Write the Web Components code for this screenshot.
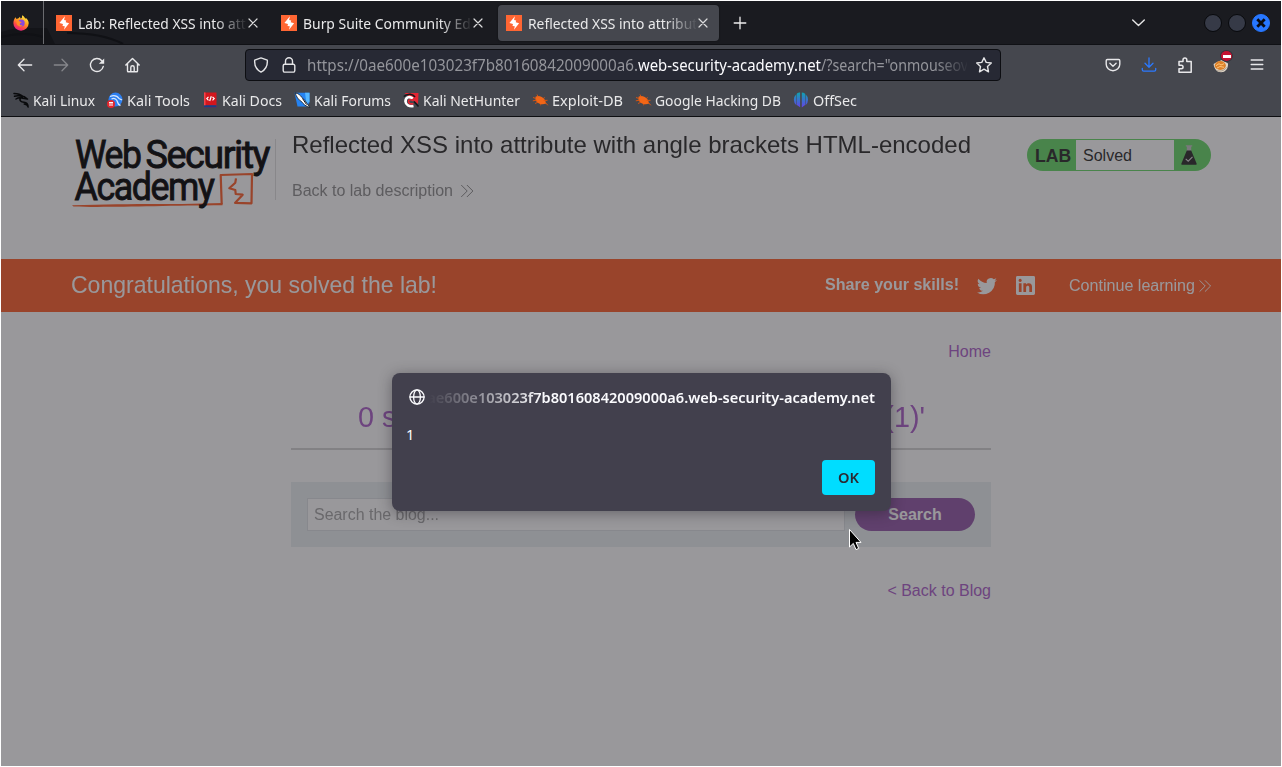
<!DOCTYPE html>
<html lang="en">
<head>
<meta charset="utf-8">
<title>Reflected XSS into attribute with angle brackets HTML-encoded</title>
<style>
html,body{margin:0;height:100%;background:#fff;overflow:hidden}
</style>
</head>
<body>
<browser-window></browser-window>
<script>
const define = (name, html, setup) => {
  const t = document.createElement('template');
  t.innerHTML = html;
  customElements.define(name, class extends HTMLElement {
    constructor() { super(); this.attachShadow({mode: 'open'}); }
    connectedCallback() {
      if (this.ready) return;
      this.ready = true;
      this.shadowRoot.append(t.content.cloneNode(true));
      if (setup) setup.call(this, this.shadowRoot);
    }
  });
};

// One line of text, condensed so that it is exactly w pixels wide.
define('fit-text', `<style>:host{display:inline-block;white-space:pre;flex:none;text-align:left}span{display:inline-block;transform-origin:0 50%}</style><span><slot></slot></span>`, function (r) {
  const w = Number(this.getAttribute('w'));
  const span = r.querySelector('span');
  const k = w / span.getBoundingClientRect().width;
  this.style.width = w + 'px';
  span.style.transform = `scaleX(${k.toFixed(5)})`;
});

const L = 'fill="none" stroke-linecap="round" stroke-linejoin="round"';
const S = L + ' stroke="currentColor"';
const ICONS = {
  firefox: `<defs><linearGradient id="a" x1=".8" y1="0" x2=".25" y2="1"><stop offset="0" stop-color="#fff04a"/><stop offset=".4" stop-color="#ffa51f"/><stop offset=".7" stop-color="#ff4a45"/><stop offset="1" stop-color="#e3178f"/></linearGradient></defs><path d="M8 15.700A7.500 7.500 0 0 1 .4 8.200C.4 6 1.200 4 2.500 2.300L3.500 4 5.500 3.200 7 1.800 7.400 3.500 8.800 3 9.200.3C11 1.500 11.800 2.500 12.200 3.600L13.300 3.200C15 4.800 15.700 6.500 15.700 8.300A7.600 7.600 0 0 1 8 15.700z" fill="url(#a)"/><circle cx="8.200" cy="8" r="3.500" fill="#8a48dd"/><path d="M3 5.200C4.600 4.800 6 5.400 6.600 6.400L8.600 6.900C8.200 8 7 8 6.700 8.700 6.500 9.800 8 10.500 9.500 10.200 8.500 12 5 11.800 3.900 9.600z" fill="#ff8a25"/>`,
  burp: `<path d="M0 0h16v16H0z" fill="#ff6633"/><path d="M8.900 1.300 3.400 8l3.600.9-.5 2 2.300.3-.8 3.600 5.100-6.500-3.400-1 .5-1.900-2.100-.5z" fill="#fff"/>`,
  close: `<path ${S} stroke-width="1.200" d="M4 4l8 8M12 4l-8 8"/>`,
  plus: `<path ${S} stroke-width="1.300" d="M8 2.200v11.600M2.200 8h11.600"/>`,
  back: `<path ${S} stroke-width="1.300" d="M14.700 8H1.500M7 2.300 1.300 8 7 13.700"/>`,
  forward: `<path ${S} stroke-width="1.300" d="M1.300 8h13.200M9 2.300 14.700 8 9 13.700"/>`,
  reload: `<path ${S} stroke-width="1.400" d="M14.300 9.400A6.500 6.500 0 1 1 12.800 3.700"/><path d="M15.200 1.400v5.400H9.800z" fill="currentColor"/>`,
  home: `<path ${S} stroke-width="1.400" d="M.8 8.100 7.500 1.500l6.700 6.600M2.500 6.700v7.200a.8.800 0 0 0 .8.800h8.400a.8.800 0 0 0 .8-.8V6.700M5.800 14.500v-4a1.700 1.700 0 0 1 3.400 0v4"/>`,
  shield: `<path ${S} stroke-width="1.400" d="M8 .9 14.300 3.200c.4 5-1.800 9.600-6.300 11.900C3.500 12.800 1.300 8.200 1.700 3.200z"/>`,
  lock: `<path ${S} stroke-width="1.400" d="M3.700 7.200h8.600a1.500 1.500 0 0 1 1.500 1.500v4.900a1.500 1.500 0 0 1-1.500 1.500H3.700a1.500 1.500 0 0 1-1.500-1.500V8.700a1.500 1.500 0 0 1 1.500-1.500zM4.500 7V4.300a3.500 3.500 0 0 1 7 0V7"/>`,
  star: `<path ${S} stroke-width="1.400" d="M8 .8 10.200 5.400 15.300 6 11.500 9.500l1 5.300L8 12.200l-4.500 2.600 1-5.300L.7 6l5.100-.6z"/>`,
  pocket: `<path ${S} stroke-width="1.400" d="M2.400 2.500h11.200c.7 0 1.200.5 1.200 1.200v3.500a6.800 6.500 0 0 1-13.600 0V3.700c0-.7.5-1.200 1.200-1.200zM4.900 6.300 8 9.200l3.100-2.900"/>`,
  download: `<path ${S} stroke-width="1.300" d="M8 .8v9.400M4 6.300 8 10.300 12 6.300M1.300 11.300v1.400c0 .8.600 1.400 1.400 1.400h10.600c.8 0 1.400-.6 1.400-1.400v-1.400"/>`,
  puzzle: `<path ${S} stroke-width="1.500" d="M2 5.200V4.500h4V3a1.900 1.900 0 0 1 3.800 0v1.500h4.400v10.700H2V11.700h2.300a1.700 1.700 0 0 0 0-3.500H2z"/>`,
  menu: `<path ${S} stroke-width="1.400" d="M2.200 3h11.600M2.200 7.500h11.600M2.200 12h11.600"/>`,
  chevron: `<path ${S} stroke-width="1.400" d="M2.700 5 8.500 10.500l5.800-5.500"/>`,
  globe: `<g ${S} stroke-width="1.300"><circle cx="8" cy="8" r="7.100"/><ellipse cx="8" cy="8" rx="3.400" ry="7.100"/><path d="M1 8h14"/></g>`,
  cookie: `<path d="M.6 7 4 5l5-2 6 3.500c.3 5-2.500 8.800-7 8.800S1.200 11.500.6 7z" fill="#e0d6c8"/><ellipse cx="7.300" cy="8.500" rx="5.600" ry="4.400" fill="#dd8128"/><path d="M3 8.700 6 6.700l2 1.300L11 6.700M4 11l3-1.500 4 .8" stroke="#ffc67d" fill="none"/><path d="M3.500 13.300c3 1.500 7 1 10-2.800" stroke="#a89c8c" fill="none"/>`,
  dragon: `<path ${L} stroke="#08090b" stroke-width="1.500" d="M1 1.500c3 .2 6 .5 8.500 2.500M1.500 4.300C4 3.700 7 3.500 9.500 5M3 7c2-1.500 4.500-1.600 7-.8l4.500.8-3-2.200-3-.8M7.500 6c-1.500 2.500.5 4 3.500 4.300 3 .3 4 2 4.200 4.700-.5-2-2-2.900-4-3"/>`,
  tools: `<circle cx="8.500" cy="7.600" r="7" fill="#2d7ff0"/><path d="M3 4.500c4-1.500 7-1 9 2l3 1.500M4.500 7c3-1.500 5.500.5 6 3s2 3 3 3.500" fill="none" stroke="#d6e8ff" stroke-width="1.300"/><circle cx="4" cy="12" r="4" fill="#e3262d"/><path d="M2 10.500h4M3 10.500V14M5 10.500V14" stroke="#fff" stroke-width="1"/>`,
  docs: `<path d="M2 .5h12.500v15H2z" fill="#d3161d"/><path d="M2 13.200h12.500v2.300H2z" fill="#173f87"/><path d="M2 .5h1.500v12.700H2z" fill="#f1464b"/><path d="M6.500 4.800 4.800 6.600l1.700 1.800M10.500 4.800l1.700 1.800-1.700 1.800M9.300 4.300 7.700 9" fill="none" stroke="#fff" stroke-width="1.200"/>`,
  forums: `<path d="M.5.800h15v9.700l-2.500 4H3.500z" fill="#2583f2"/><path d="M11 .8h4.500v9l-3 2z" fill="#54b7ff"/><path d="M1 1c3.500.3 5 2 7 4.500 2 2 4 4 5 6l2.800 4C12 14.500 9 12 7.500 9.500 4 8 2.500 4 1 1z" fill="#fff" stroke="#101822" stroke-width=".8"/><path d="m8.500 6.500 4 6" stroke="#15171c"/>`,
  hunter: `<path d="M1.500 1H15.500L15 12z" fill="#e52432"/><path d="M11 9.500 15.500 14.500M.8 4.500C5 .8 10 2 12 5" stroke="#15161a" stroke-width="1.600" fill="none"/><path d="M9.800 6.500C6 3.500 2.500 5.500 2.500 9.500c.3 3.500 3.700 5.300 8 4.500" fill="none" stroke="#fff" stroke-width="2.700"/><path d="M10.500 9C8 7 5.300 7.500 5.500 9.600c.2 2 3 2.800 5 2" fill="none" stroke="#e52432" stroke-width="1.600"/>`,
  bug: `<path d="M3.500 4.800C6 3.200 10.500 4.500 13 8l1.200 3.500C9.500 13.500 5 11.500 3.500 8z" fill="#f26617"/><path d="M1 5.500l3 1M.8 8.800l4-.6M3 11.500l3-1.300M5 2.500l1 2M9 12l-.5 1.300M12.500 5.200l-1.200 1.600M13 10l2.800 3.300M11.500 8.500l4-.2" stroke="#e2560c" stroke-width=".9"/>`,
  offsec: `<defs><linearGradient id="o" x1="0" y1="0" x2="0" y2="1"><stop offset="0" stop-color="#0fa3b1"/><stop offset="1" stop-color="#6540e8"/></linearGradient></defs><path d="M3.300 2.300v11A7.400 7.400 0 0 1 3.300 2.300zM3.800 1.700C5 .9 6 .7 7.100.6v14.600c-1.200-1-2.400-1.600-3.300-2.200zM8.800.6c1 .1 2.300.4 3.300 1.100V13l-3.300 2.600zM12.600 2.300v11a7.400 7.400 0 0 0 0-11z" fill="url(#o)"/>`,
  guillemet: `<path ${S} stroke-width="1" d="M2 2.300 7.700 8 2 13.700M7.700 2.300 13.400 8l-5.700 5.700"/>`,
  twitter: `<path fill="currentColor" d="M15.900 3.100a6.500 6.500 0 0 1-1.900.5 3.300 3.300 0 0 0 1.500-1.800 6.600 6.600 0 0 1-2.100.8A3.300 3.300 0 0 0 7.800 5.600 9.300 9.300 0 0 1 1.100 2.200a3.300 3.300 0 0 0 1 4.400 3.300 3.300 0 0 1-1.500-.4 3.300 3.300 0 0 0 2.600 3.200 3.300 3.300 0 0 1-1.500.1 3.300 3.300 0 0 0 3.100 2.300A6.600 6.600 0 0 1 0 13.100a9.300 9.300 0 0 0 14.300-8.300 6.700 6.700 0 0 0 1.600-1.700z"/>`,
  linkedin: `<path fill="currentColor" fill-rule="evenodd" d="M1.200 0h13.600Q16 0 16 1.200v13.600Q16 16 14.800 16H1.200Q0 16 0 14.800V1.200Q0 0 1.200 0zM2.400 6.100v7.400h2.300V6.100zM3.500 2.400a1.350 1.350 0 1 0 .01 0zM6.200 6.100v7.400h2.300V9.800c0-2 2.700-2.200 2.700 0v3.700h2.300V9c0-3.600-3.700-3.600-5-1.800V6.100z"/>`,
  wclose: `<path d="M4.300 4.300l7.400 7.400M11.700 4.300l-7.400 7.400" stroke="#0b0c10" stroke-width="2.800"/>`
};
define('ui-icon', `<style>:host{display:inline-block;width:16px;height:16px;flex:none}svg{display:block;width:100%;height:100%;overflow:visible}</style>`, function (r) {
  r.append(document.createRange().createContextualFragment(`<svg viewBox="0 0 16 16">${ICONS[this.getAttribute('name')]}</svg>`));
});

define('browser-tab', `<style>
:host{display:flex;align-items:center;box-sizing:border-box;width:221px;height:36px;padding:0 8px;border-radius:4px;color:#e9e9ea;flex:none}
:host([active]){background:#45474e;box-shadow:0 0 2px #0008}
.t{margin-left:6px;width:168px;overflow:hidden;white-space:nowrap;-webkit-mask:linear-gradient(90deg,#000 137px,transparent 170px)}
ui-icon.x{margin-left:-1px;color:#dcdcdd}
</style><ui-icon name="burp"></ui-icon><div class="t"><slot></slot></div><ui-icon class="x" name="close"></ui-icon>`);

define('tab-strip', `<style>
:host{display:flex;height:44px;background:#1a1b20;align-items:center;position:relative;box-sizing:border-box;border-bottom:1px solid #101115}
.art{position:absolute;left:0;bottom:0}
.pin{width:42px;height:43px;border-right:1px solid #6a6b6f;display:flex;align-items:center;position:relative}
.pin ui-icon{margin-left:12px;width:16px;height:16px}
.tabs{display:flex;gap:4px;margin-left:4px;position:relative}
.plus{margin-left:13px;color:#eee}
.chev{margin-left:auto;margin-right:58px;color:#e6e6e6}
.b{width:16px;height:16px;border-radius:50%;background:#363a47;border:1px solid #08090c;margin-right:6px}
.c{background:#2777ff;border-color:#2777ff;margin-right:11px;display:flex}
</style>
<svg class="art" width="180" height="16" viewBox="0 0 180 16"><path d="M0 4Q24-3 46 0l8 16H0z" fill="#131418"/><path d="M0 9Q25 3 42 9M66 5q36 0 56 11" fill="none" stroke="#101115" stroke-width="2"/></svg>
<div class="pin"><ui-icon name="firefox"></ui-icon></div>
<div class="tabs">
<browser-tab><fit-text w="177">Lab: Reflected XSS into attri</fit-text></browser-tab>
<browser-tab><fit-text w="180">Burp Suite Community Editi</fit-text></browser-tab>
<browser-tab active><fit-text w="177">Reflected XSS into attribute</fit-text></browser-tab></div>
<ui-icon class="plus" name="plus"></ui-icon>
<ui-icon class="chev" name="chevron"></ui-icon>
<span class="b"></span><span class="b"></span><span class="b c"><ui-icon name="wclose"></ui-icon></span>`);

define('address-bar', `<style>
:host{display:flex;align-items:center;box-sizing:border-box;width:756px;height:32px;border:1px solid #0d0e12;border-radius:4px;background:#272934;color:#e4e4e6;padding-left:7px;flex:none}
.lock{margin-left:12px}
.u{margin-left:10px;width:660px;overflow:hidden;white-space:nowrap;font-size:15.500px;color:#94959b;display:flex;-webkit-mask:linear-gradient(90deg,#000 628px,transparent 662px)}
b{font-weight:400;color:#fbfbfe}
.star{margin-left:9px}
</style><ui-icon name="shield"></ui-icon><ui-icon class="lock" name="lock"></ui-icon>
<div class="u"><fit-text w="331">https://0ae600e103023f7b80160842009000a6.</fit-text><b><fit-text w="183">web-security-academy.net</fit-text></b><fit-text w="161">/?search="onmouseover</fit-text></div>
<ui-icon class="star" name="star"></ui-icon>`);

define('nav-bar', `<style>
:host{display:flex;align-items:center;height:40px;color:#e8e8ea;padding:0 16px;box-sizing:border-box}
.fw{margin-left:20px;color:#85868b}.g{margin-left:20px}
address-bar{margin-left:104px}
.p{margin-left:104px}
.d{margin-left:20px;color:#2b79ff}
.ck{position:relative;margin-left:20px;display:flex}
.badge{position:absolute;left:8px;top:-6px;width:11px;height:10px;border-radius:50%;background:#c41230;box-shadow:0 0 0 1px #33343a;display:flex;align-items:center;justify-content:center}
.badge i{width:8px;height:3px;background:#fff}
</style><ui-icon name="back"></ui-icon><ui-icon class="fw" name="forward"></ui-icon><ui-icon class="g" name="reload"></ui-icon><ui-icon class="g" name="home"></ui-icon>
<address-bar></address-bar>
<ui-icon class="p" name="pocket"></ui-icon><ui-icon class="d" name="download"></ui-icon><ui-icon class="g" name="puzzle"></ui-icon>
<span class="ck"><ui-icon name="cookie"></ui-icon><span class="badge"><i></i></span></span><ui-icon class="g" name="menu"></ui-icon>`);

define('book-mark', `<style>:host{display:flex;align-items:center;gap:4px;color:#e9e9ea}</style><ui-icon></ui-icon><slot></slot>`, function (r) {
  const i = document.createElement('ui-icon');
  i.setAttribute('name', this.getAttribute('icon'));
  r.querySelector('ui-icon').replaceWith(i);
});
define('bookmarks-bar', `<style>:host{display:flex;align-items:center;gap:12px;height:31px;padding:0 0 1px 12px;box-sizing:border-box;border-bottom:1px solid #0d0e11;margin-bottom:0}
:host{height:32px}book-mark{margin-top:-1px}</style>
<book-mark icon="dragon"><fit-text w="62">Kali Linux</fit-text></book-mark>
<book-mark icon="tools"><fit-text w="63">Kali Tools</fit-text></book-mark>
<book-mark icon="docs"><fit-text w="60">Kali Docs</fit-text></book-mark>
<book-mark icon="forums"><fit-text w="77">Kali Forums</fit-text></book-mark>
<book-mark icon="hunter"><fit-text w="97">Kali NetHunter</fit-text></book-mark>
<book-mark icon="bug"><fit-text w="71">Exploit-DB</fit-text></book-mark>
<book-mark icon="bug"><fit-text w="126">Google Hacking DB</fit-text></book-mark>
<book-mark icon="offsec"><fit-text w="44">OffSec</fit-text></book-mark>`);

define('academy-logo', `<style>:host{display:block;width:203px;height:80px;flex:none}svg{display:block}text{font:400 38px Roboto,sans-serif;letter-spacing:-1.500px;fill:#0b0b0b;stroke:#0b0b0b;stroke-width:.9}</style>
<svg width="203" height="80" viewBox="0 0 203 80" fill="none">
<path d="M150.700 65.300 149.700 36 181 35l-.5 29.300-16.500-.4 7.700-8.200-7-.7-.4-4-6-1.700 6-5.600.7-4.400" stroke="#f63" stroke-width="2.200" stroke-linejoin="round"/>
<path d="M1 66.300c40-1 70-1.500 110-1.200l40.500-1v2.200c-60 .3-120 2.500-149 1.200z" fill="#f63"/>
<text x="4" y="28.600" textLength="65.500" lengthAdjust="spacingAndGlyphs">Web</text>
<text x="74.500" y="28.600" textLength="123.500" lengthAdjust="spacingAndGlyphs">Security</text>
<text x="3.500" y="61" textLength="139" lengthAdjust="spacingAndGlyphs">Academy</text></svg>`);

define('lab-status', `<style>
:host{display:flex;align-items:center;box-sizing:border-box;width:184px;height:32px;border-radius:16px;background:#6ddb6d;color:#333332;flex:none}
b{font-size:17.600px;width:49px;padding-left:8px;box-sizing:border-box;padding-top:2px}
span{background:#fff;width:98px;height:30px;line-height:31px;padding-left:7px;box-sizing:border-box}
svg{margin:0 0 1px 7px}
</style><b><slot name="label"></slot></b><span><slot></slot></span><svg width="16" height="20" viewBox="0 0 16 20"><path d="M4.800.3h6.400v1.300h-1v5H5.800v-5h-1z" fill="#c6c6c6"/><path d="M5.800 5.500h4.400l5.300 12.700c.5 1-.1 1.600-.9 1.600H1.400c-.8 0-1.400-.6-.9-1.600z" fill="#333332"/><path d="m4.700 13.800 2.500 2.400 4.300-4.400" fill="none" stroke="#ddd" stroke-width="1.100"/></svg>`);

define('lab-header', `<style>
:host{display:flex;height:142px;padding:22px 70px 0;box-sizing:border-box}
.m{margin-left:1px;border-left:1px solid #e0e0e0;height:61px;padding-left:16px;flex:1}
h2{font-weight:400;font-size:24px;line-height:28px;margin:-8px 0 0;color:#333332}
a{display:flex;align-items:center;color:#929292;margin-top:23px;line-height:18px}
a ui-icon{margin-left:6px;width:17px}
</style><academy-logo></academy-logo>
<div class="m"><h2><fit-text w="679">Reflected XSS into attribute with angle brackets HTML-encoded</fit-text></h2>
<a><fit-text w="161">Back to lab description</fit-text><ui-icon name="guillemet"></ui-icon></a></div>
<lab-status><span slot="label">LAB</span>Solved</lab-status>`);

define('solved-banner', `<style>
:host{display:flex;align-items:center;height:53px;background:#f63;color:#fff;padding:0 68px 0 70px;box-sizing:border-box}
h4{font-weight:400;font-size:24px;margin:-2px auto 0 0;line-height:28px}
b{margin-top:-1px}
.tw{margin-left:18px;width:20px;height:20px}.li{margin-left:19px;width:19px;height:19px}
.cl{margin-left:34px;padding-top:1px}
.ar{margin-left:3px;width:15px}
</style><h4><fit-text w="366">Congratulations, you solved the lab!</fit-text></h4>
<b><fit-text w="134">Share your skills!</fit-text></b><ui-icon class="tw" name="twitter"></ui-icon><ui-icon class="li" name="linkedin"></ui-icon>
<span class="cl"><fit-text w="126">Continue learning</fit-text></span><ui-icon class="ar" name="guillemet"></ui-icon>`);

define('search-form', `<style>
:host{display:flex;gap:10px;padding:16px;background:#ebf0f3;height:65px;box-sizing:border-box}
.i{flex:1;background:#fff;border:1px solid #dfe2e5;box-sizing:border-box;height:33px;line-height:31px;padding-left:6px;color:#a9a9a9}
.b{width:120px;height:33px;line-height:33px;border-radius:17px;background:#9760ac;color:#fff;font-weight:700;text-align:center}
</style><div class="i"><fit-text w="125">Search the blog...</fit-text></div><div class="b">Search</div>`);

define('blog-content', `<style>
:host{display:block;width:700px;margin:0 auto;padding-top:31px;color:#b067cc}
.r{text-align:right;line-height:18px}
h1{font-weight:400;font-size:29px;line-height:34px;margin:39px 0 0;padding-bottom:14px;text-align:center;border-bottom:2px solid #d6d6d6}
search-form{margin:32px 0 35px}
</style><div class="r">Home</div>
<h1><fit-text w="567">0 search results for '"onmouseover="alert(1)'</fit-text></h1>
<search-form></search-form><div class="r">&lt; Back to Blog</div>`);

define('alert-dialog', `<style>
:host{display:flex;flex-direction:column;box-sizing:border-box;width:499px;height:138px;border-radius:8px;background:#42404d;color:#fbfbfe;padding:16px;box-shadow:0 2px 14px rgba(28,27,34,.42);font:14.67px/20px "Noto Sans",sans-serif}
.h{display:flex;align-items:center;height:16px;font-weight:600}
.h ui-icon{margin-left:1px}
.h div{margin-left:4px;width:446px;overflow:hidden;display:flex;justify-content:flex-end;-webkit-mask:linear-gradient(90deg,transparent 0,#000 115px)}
.m{margin-top:19px;margin-left:-2px;line-height:20px}
.b{margin:16px 0 0 auto;width:53px;height:35px;line-height:35px;border-radius:4px;background:#00ddff;color:#2b2a33;text-align:center;font-weight:600}
</style><div class="h"><ui-icon name="globe"></ui-icon><div><fit-text w="456">0ae600e103023f7b80160842009000a6.web-security-academy.net</fit-text></div></div>
<div class="m">1</div><div class="b"><fit-text w="21">OK</fit-text></div>`);

define('browser-window', `<style>
:host{display:flex;flex-direction:column;box-sizing:border-box;width:1280px;height:765px;margin:1px;overflow:hidden;font:14.67px/20px "Noto Sans",sans-serif;background:#45474e}
.page{flex:1;position:relative;background:#fff;font:16px "Liberation Sans",Arial,sans-serif;overflow:hidden}
.veil{position:absolute;inset:0;background:rgba(28,27,34,.45)}
alert-dialog{position:absolute;left:391px;top:256px}
.cur{position:absolute;left:847px;top:411px}
</style><tab-strip></tab-strip><nav-bar></nav-bar><bookmarks-bar></bookmarks-bar>
<div class="page"><lab-header></lab-header><solved-banner></solved-banner><blog-content></blog-content>
<div class="veil"></div><alert-dialog></alert-dialog>
<svg class="cur" width="14" height="24" viewBox="0 0 14 24"><path d="M1.500 1.500v17.500l3.800-3.600 2.700 6.200 2.700-1.200-2.700-6h5z" fill="#000" stroke="#fff" stroke-width="1"/></svg></div>`);
</script>
</body>
</html>
